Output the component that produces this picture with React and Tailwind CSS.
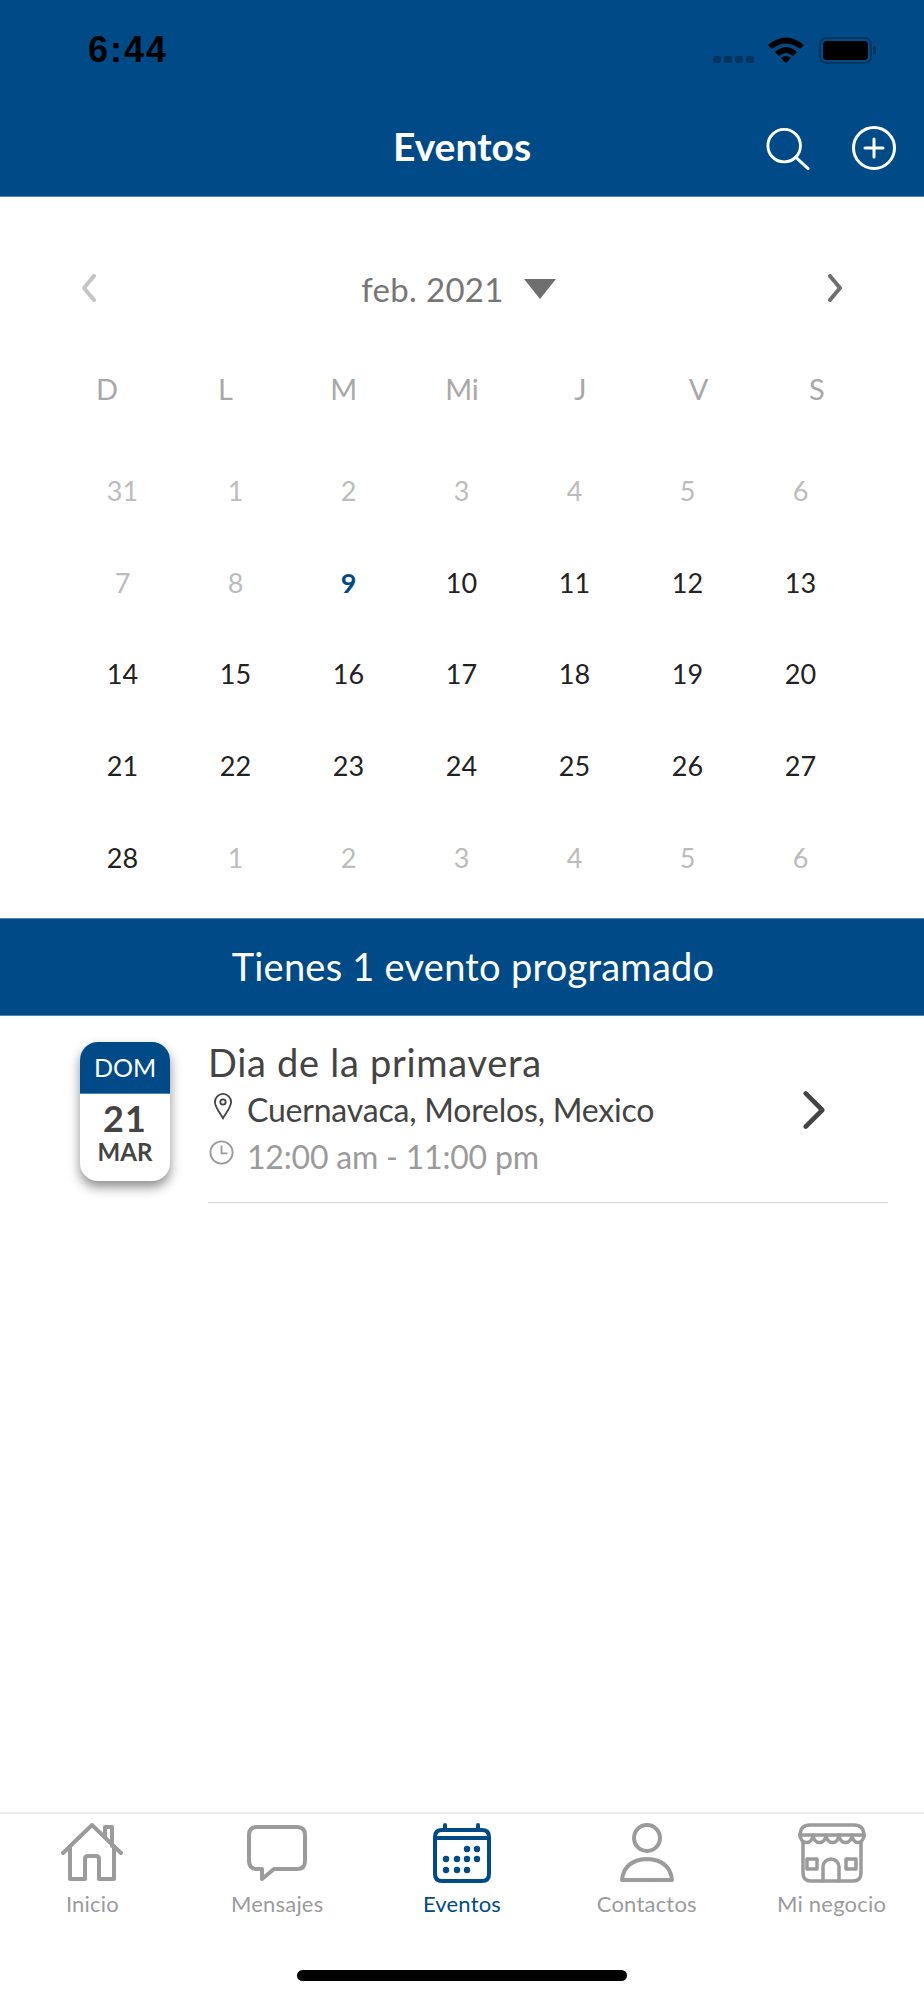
import React from "react";

const font = "font-['Lato','Noto_Sans',sans-serif]";

const weekDays = ["D", "L", "M", "Mi", "J", "V", "S"];

const days = [
  [31, 1, 2, 3, 4, 5, 6, 7, 8].map((d) => ({ d, muted: true })),
  [{ d: 9, today: true }],
  Array.from({ length: 19 }, (_, i) => ({ d: i + 10 })),
  [1, 2, 3, 4, 5, 6].map((d) => ({ d, muted: true })),
].flat();

const HomeIcon = () => (
  <svg width="62" height="60" viewBox="0 0 62 60" fill="none" stroke="#9b9b9b" strokeWidth="4" strokeLinecap="round" strokeLinejoin="round">
    <path d="M2 30 L31 2 L60 30" />
    <path d="M44 14 V4 H51 V23" />
    <path d="M9 24 V56 H24 V36 Q24 33 27 33 H35 Q38 33 38 36 V56 H53 V24" />
  </svg>
);

const ChatIcon = () => (
  <svg width="60" height="56" viewBox="0 0 60 56" fill="none" stroke="#9b9b9b" strokeWidth="4" strokeLinecap="round" strokeLinejoin="round" className="mb-[2px]">
    <path d="M10 2 H50 Q58 2 58 10 V36 Q58 44 50 44 H27 L15 54 V44 H10 Q2 44 2 36 V10 Q2 2 10 2 Z" />
  </svg>
);

const CalendarIcon = () => (
  <svg width="58" height="60" viewBox="0 0 58 60" fill="none" stroke="#004b87" strokeWidth="4" strokeLinecap="round" strokeLinejoin="round">
    <path d="M9 7 H49 Q56 7 56 14 V51 Q56 58 49 58 H9 Q2 58 2 51 V14 Q2 7 9 7 Z" />
    <path d="M2 15 H56" />
    <path d="M12 2 V7 M45 2 V7" />
    <g fill="#004b87" stroke="none">
      <circle cx="34" cy="26" r="3.2" /><circle cx="44" cy="26" r="3.2" />
      <circle cx="13" cy="36" r="3.2" /><circle cx="24" cy="36" r="3.2" /><circle cx="34" cy="36" r="3.2" /><circle cx="44" cy="36" r="3.2" />
      <circle cx="13" cy="47" r="3.2" /><circle cx="24" cy="47" r="3.2" /><circle cx="34" cy="47" r="3.2" />
    </g>
  </svg>
);

const PersonIcon = () => (
  <svg width="56" height="60" viewBox="0 0 56 60" fill="none" stroke="#9b9b9b" strokeWidth="4" strokeLinecap="round" strokeLinejoin="round">
    <circle cx="28" cy="15" r="13" />
    <path d="M3 57 Q5 37 28 36 Q51 37 53 57 Z" />
  </svg>
);

const StoreIcon = () => (
  <svg width="68" height="60" viewBox="0 0 68 60" fill="none" stroke="#9b9b9b" strokeWidth="3.5" strokeLinecap="round" strokeLinejoin="round">
    <path d="M2 13 Q2 2 12 2 H56 Q66 2 66 13" />
    <path d="M2 12 H66" />
    <path d="M2 12 A6.5 7.5 0 0 0 15 12 A6.5 7.5 0 0 0 28 12 A6.5 7.5 0 0 0 41 12 A6.5 7.5 0 0 0 54 12 A6 7.5 0 0 0 66 12" />
    <path d="M5 19 V50 Q5 58 13 58 H55 Q63 58 63 50 V19" />
    <path d="M25 58 V44 A8 8 0 0 1 41 44 V58" />
    <rect x="9" y="36" width="10" height="10" />
    <rect x="48" y="36" width="10" height="10" />
  </svg>
);

const tabs = [
  { label: "Inicio", icon: <HomeIcon /> },
  { label: "Mensajes", icon: <ChatIcon /> },
  { label: "Eventos", icon: <CalendarIcon />, active: true },
  { label: "Contactos", icon: <PersonIcon /> },
  { label: "Mi negocio", icon: <StoreIcon /> },
];

export default function App() {
  return (
    <div className={`${font} w-[924px] h-[2000px] bg-white flex flex-col overflow-hidden`}>
      <header className="h-[197px] bg-[#004b87] border-b border-[#4a86b8] shrink-0 flex flex-col">
        <div className="h-[100px] px-[88px] flex items-center justify-between">
          <span className="font-['Liberation_Sans',sans-serif] font-bold text-[36px] tracking-[2px] text-black">6:44</span>
          <div className="flex items-center mr-[-40px]">
            <div className="flex gap-[3px] mt-[18px] mr-[14px]">
              <span className="w-[8px] h-[7px] rounded-[2px] bg-[#00355f]" />
              <span className="w-[8px] h-[7px] rounded-[2px] bg-[#00355f]" />
              <span className="w-[8px] h-[7px] rounded-[2px] bg-[#00355f]" />
              <span className="w-[8px] h-[7px] rounded-[2px] bg-[#00355f]" />
            </div>
            <svg width="36" height="28" viewBox="0 0 36 28" className="mr-[15px]">
              <path d="M0 9 Q18 -6 36 9 L32 13 Q18 2 4 13 Z M7 16 Q18 6 29 16 L25 20 Q18 14 11 20 Z M13 22 Q18 18 23 22 L18 27 Z" fill="#000" />
            </svg>
            <div className="w-[53px] h-[27px] rounded-[7px] border-2 border-[#00355f] p-[2px] flex">
              <span className="flex-1 rounded-[4px] bg-black" />
            </div>
            <span className="w-[3px] h-[8px] ml-[1px] rounded-r-[2px] bg-[#00355f]" />
          </div>
        </div>
        <div className="relative h-[96px] flex items-center justify-center">
          <span className="text-[39px] font-bold text-white mt-[-4px]">Eventos</span>
          <div className="absolute right-[28px] top-[26px] flex items-center gap-[42px]">
            <svg width="44" height="43" viewBox="0 0 46 44" fill="none" stroke="#fff" strokeWidth="3" strokeLinecap="round">
              <circle cx="19" cy="19" r="17" />
              <path d="M31 31 L44 43" />
            </svg>
            <svg width="44" height="44" viewBox="0 0 44 44" fill="none" stroke="#fff" strokeWidth="3" strokeLinecap="round">
              <circle cx="22" cy="22" r="20.5" />
              <path d="M22 13 V31 M13 22 H31" />
            </svg>
          </div>
        </div>
      </header>

      <section className="h-[721px] shrink-0 flex flex-col">
        <div className="h-[172px] shrink-0 flex items-start justify-between px-[81px] pt-[77px]">
          <svg width="16" height="28" viewBox="0 0 16 28" fill="none" stroke="#c4c4c4" strokeWidth="4" strokeLinecap="round" strokeLinejoin="round">
            <path d="M13 2 L3 14 L13 26" />
          </svg>
          <div className="flex items-start gap-[20px] ml-[-7px]">
            <span className="text-[33px] leading-[34px] text-[#767676] tracking-[0.3px] mt-[-2px]">feb. 2021</span>
            <span className="w-0 h-0 mt-[5px] border-l-[16px] border-r-[16px] border-t-[20px] border-l-transparent border-r-transparent border-t-[#6f6f6f]" />
          </div>
          <svg width="16" height="28" viewBox="0 0 16 28" fill="none" stroke="#6f6f6f" strokeWidth="4" strokeLinecap="round" strokeLinejoin="round">
            <path d="M3 2 L13 14 L3 26" />
          </svg>
        </div>
        <div className="grid grid-cols-7 px-[48px] h-[48px] shrink-0 text-[29px] leading-[40px] text-[#a8a8a8] text-center">
          {weekDays.map((w) => (
            <span key={w}>{w}</span>
          ))}
        </div>
        <div className="grid grid-cols-7 pl-[66px] pr-[67px] mt-[54px] gap-y-[51.7px] text-[27px] leading-[40px] text-center">
          {days.map((c, i) => (
            <span
              key={i}
              className={c.today ? "font-bold text-[#004b87]" : c.muted ? "text-[#bcbcbc]" : "text-[#222222]"}
            >
              {c.d}
            </span>
          ))}
        </div>
      </section>

      <div className="h-[98px] shrink-0 bg-[#004b87] border-y border-[#4a86b8] flex items-center justify-center">
        <span className="text-[38px] text-white tracking-[0.25px] ml-[22px] mt-[-2px]">Tienes 1 evento programado</span>
      </div>

      <div className="flex-1 flex pl-[80px] pr-[36px] pt-[26px]">
        <div className="w-[90px] h-[139px] shrink-0 rounded-[18px] bg-white shadow-[0_6px_12px_rgba(0,0,0,0.45)] overflow-hidden flex flex-col items-center">
          <div className="w-full h-[52px] bg-[#004b87] border-b border-[#4a86b8] text-white text-[25px] leading-[50px] text-center">DOM</div>
          <span className="text-[36px] leading-[40px] mt-[4px] font-bold text-[#444444] tracking-[1px]">21</span>
          <span className="text-[24px] leading-[28px] font-bold text-[#444444]">MAR</span>
        </div>
        <div className="flex-1 ml-[38px] h-[161px] border-b border-[#d6d6d6] flex items-start justify-between">
          <div className="flex flex-col">
            <span className="text-[38px] leading-[44px] text-[#444444] tracking-[0.7px] mt-[-2px]">Dia de la primavera</span>
            <div className="flex items-center mt-[4px]">
              <svg width="20" height="27" viewBox="0 0 22 30" fill="none" stroke="#444" strokeWidth="2" className="ml-[5px] mt-[-8px]">
                <path d="M11 28 C6 20 2 15 2 10 A9 9 0 0 1 20 10 C20 15 16 20 11 28 Z" />
                <circle cx="11" cy="10" r="3" />
              </svg>
              <span className="text-[32px] leading-[44px] text-[#444444] tracking-[-0.2px] ml-[14px]">Cuernavaca, Morelos, Mexico</span>
            </div>
            <div className="flex items-center mt-[3px]">
              <svg width="25" height="25" viewBox="0 0 27 27" fill="none" stroke="#9b9b9b" strokeWidth="2" className="ml-[1px] mt-[-9px]">
                <circle cx="13.5" cy="13.5" r="12" />
                <path d="M13.5 6 V14.5 H20" />
              </svg>
              <span className="text-[32px] leading-[44px] text-[#9b9b9b] tracking-[-0.2px] ml-[13px]">12:00 am - 11:00 pm</span>
            </div>
          </div>
          <svg width="24" height="40" viewBox="0 0 26 42" fill="none" stroke="#444" strokeWidth="5" strokeLinecap="round" strokeLinejoin="round" className="mt-[48px] mr-[62px]">
            <path d="M4 3 L22 21 L4 39" />
          </svg>
        </div>
      </div>

      <nav className="h-[188px] shrink-0 border-t-2 border-[#ebebeb] flex flex-col">
        <div className="grid grid-cols-5 pt-[7px]">
          {tabs.map((t) => (
            <div
              key={t.label}
              className={`flex flex-col items-center ${t.active ? "text-[#004b87]" : "text-[#9b9b9b]"}`}
            >
              <div className="h-[62px] flex items-end">{t.icon}</div>
              <span className="text-[22px] leading-[30px] mt-[6px] tracking-[0.2px]">{t.label}</span>
            </div>
          ))}
        </div>
        <div className="mt-[51px] w-[330px] h-[11px] self-center rounded-full bg-black" />
      </nav>
    </div>
  );
}
